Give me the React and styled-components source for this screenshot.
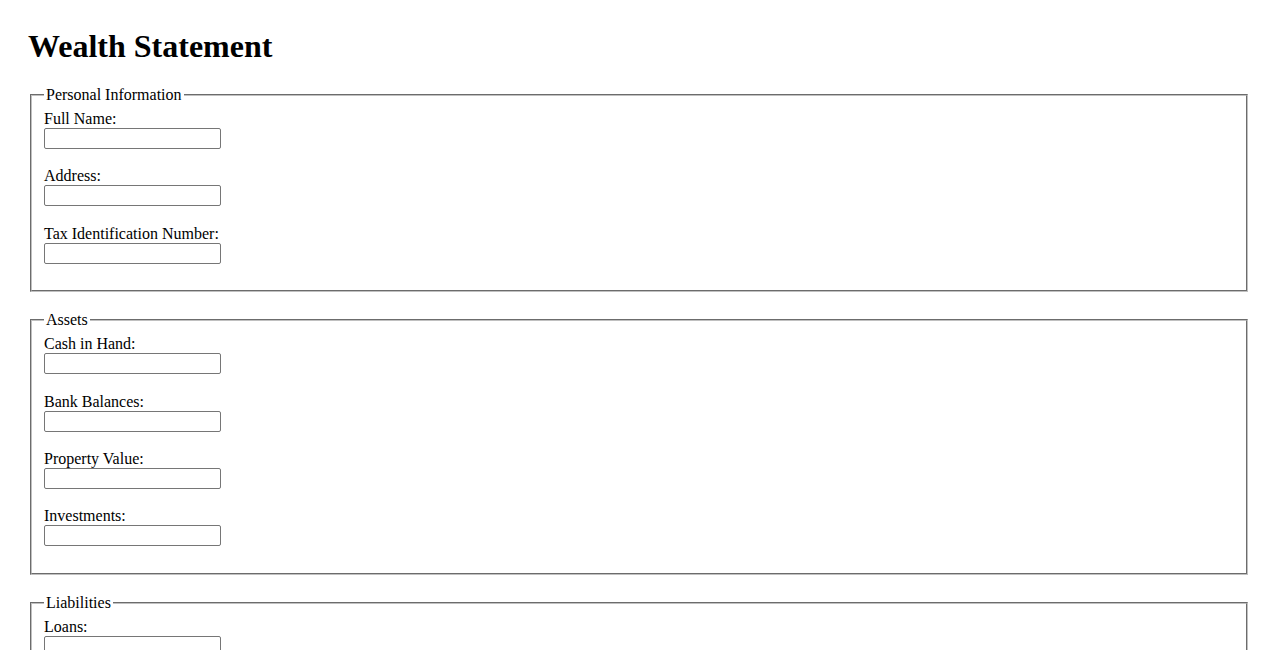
import React from 'react';
import styled, {createGlobalStyle} from 'styled-components';

const GlobalStyle = createGlobalStyle`
  html, body {
    margin: 0;
    background: #fff;
  }
  body {
    font-family: "Liberation Serif", "Times New Roman", serif;
    font-size: 16px;
    color: #000;
  }
`;

const Page = styled.div`
  padding: 28px 28px 40px;
`;

const Title = styled.h1`
  font-size: 32px;
  font-weight: bold;
  margin: 0 0 21px;
  line-height: normal;
`;

const Section = styled.fieldset`
  margin: 0 2px 19px;
  padding: 6px 12px 8.5px;
  border: 2px groove rgb(192, 192, 192);
  min-inline-size: min-content;
`;

const Legend = styled.legend`
  padding: 0 2px;
`;

const Field = styled.div`
  margin-bottom: 18.25px;
`;

const Label = styled.label`
  display: block;
  line-height: 18px;
`;

const TextInput = styled.input`
  display: block;
  box-sizing: border-box;
  width: 177px;
  height: 21px;
  margin: 0;
  padding: 1px 2px;
  border: 1px solid #767676;
  border-radius: 2px;
  font: 13.33px Arial, sans-serif;
  background: #fff;
`;

const sections = [
    {legend: 'Personal Information', fields: ['Full Name', 'Address', 'Tax Identification Number']},
    {legend: 'Assets', fields: ['Cash in Hand', 'Bank Balances', 'Property Value', 'Investments']},
    {legend: 'Liabilities', fields: ['Loans', 'Credit Card Debt', 'Other Liabilities']},
];

function App() {
    return (
        <Page>
            <GlobalStyle/>
            <Title>Wealth Statement</Title>
            {sections.map(s => (
                <Section key={s.legend}>
                    <Legend>{s.legend}</Legend>
                    {s.fields.map(f => (
                        <Field key={f}>
                            <Label>{f}:</Label>
                            <TextInput type="text"/>
                        </Field>
                    ))}
                </Section>
            ))}
        </Page>
    );
}

export default App;
